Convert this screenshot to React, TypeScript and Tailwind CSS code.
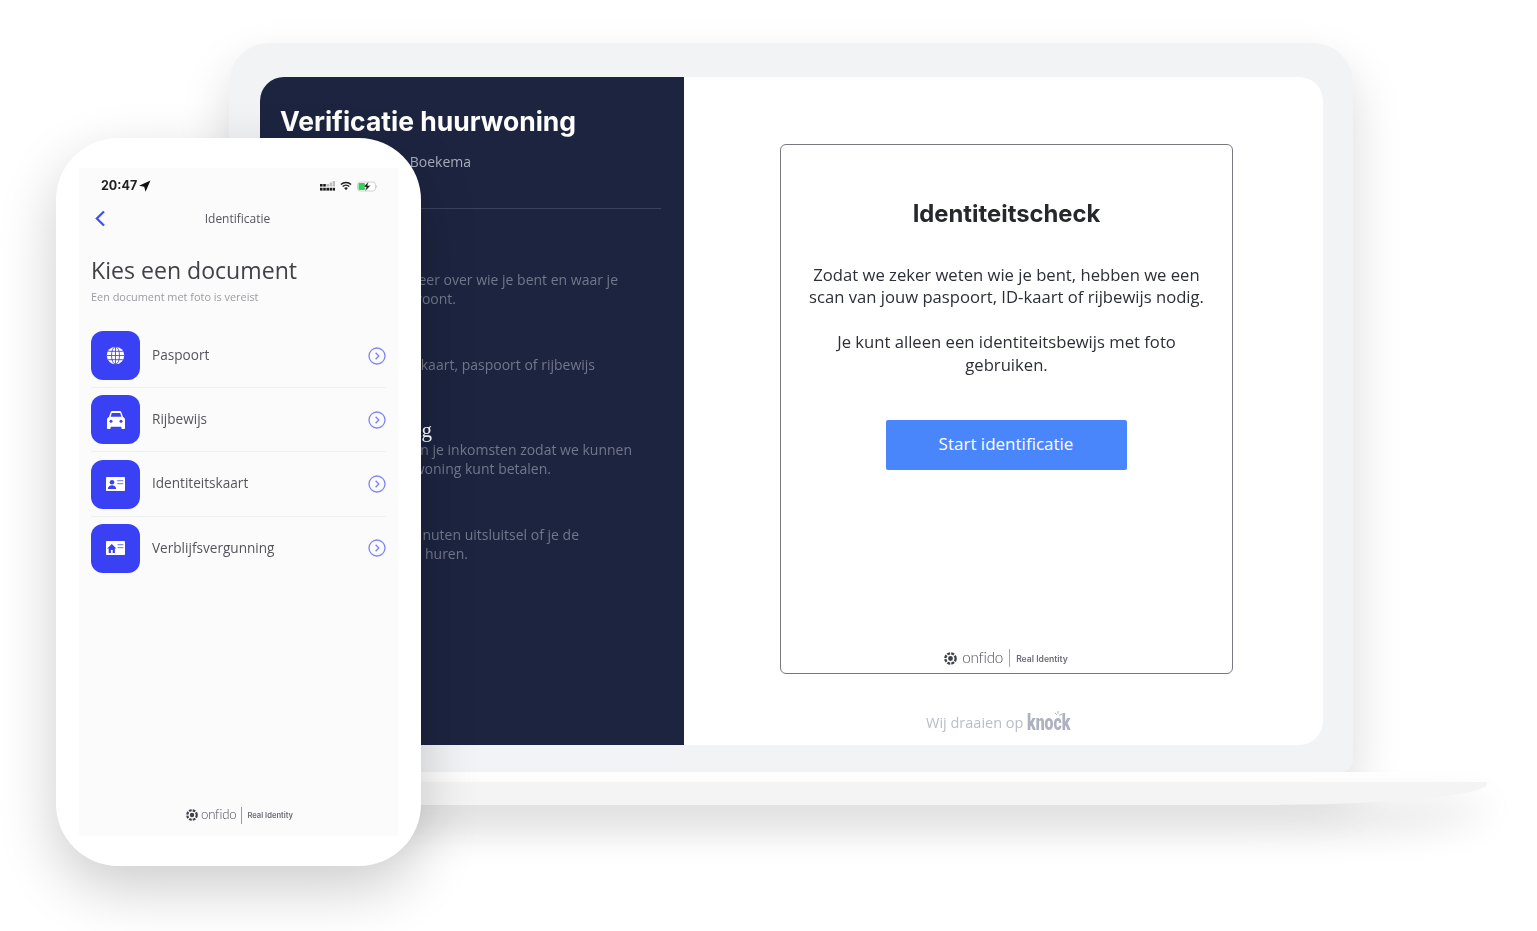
import React from "react";

const open = "font-['Open_Sans',sans-serif]";
const display = "font-['Inter',sans-serif]";

type Line = { text: string; w: string };
type Section = { head: string; headClass: string; lines: Line[] };
const headBase = "font-['Liberation_Serif',serif] leading-[19px] font-normal text-white whitespace-nowrap flex justify-end";
const sections: Section[] = [
  {
    head: "Gegevens",
    headClass: "w-[100px] text-[18px]",
    lines: [
      { text: "Vertel ons meer over wie je bent en waar je", w: "w-[337px]" },
      { text: "op dit moment woont.", w: "w-[175px]" },
    ],
  },
  {
    head: "Identiteit",
    headClass: "w-[100px] text-[18px]",
    lines: [{ text: "Upload je ID-kaart, paspoort of rijbewijs", w: "w-[314px]" }],
  },
  {
    head: "Inkomenstoetsing",
    headClass: "w-[151px] text-[21px]",
    lines: [
      { text: "Wij verifiëren je inkomsten zodat we kunnen", w: "w-[351px]" },
      { text: "zien of je de woning kunt betalen.", w: "w-[270px]" },
    ],
  },
  {
    head: "Resultaat",
    headClass: "w-[100px] text-[18px]",
    lines: [
      { text: "Binnen enkele minuten uitsluitsel of je de", w: "w-[298px]" },
      { text: "woning mag huren.", w: "w-[187px]" },
    ],
  },
];

function OnfidoMark({ size }: { size: number }) {
  return (
    <svg width={size} height={size} viewBox="0 0 24 24" className="shrink-0">
      <circle cx="12" cy="12" r="4.4" fill="#3f4249" />
      <circle cx="12" cy="12" r="9.5" fill="none" stroke="#3f4249" strokeWidth="4.400" strokeDasharray="5.500 2" />
    </svg>
  );
}

function Onfido({ small }: { small?: boolean }) {
  if (small) {
    return (
      <div className="flex items-center h-[18px]">
        <OnfidoMark size={12} />
        <span className="ml-[3px] font-['Lato',sans-serif] font-light text-[13.200px] leading-none tracking-[-0.2px] text-[#4c4f56]">onfido</span>
        <span className="ml-[5px] w-px h-[17px] bg-[#9a9ca3]" />
        <span className="ml-[5px] mt-[2px] font-['Inter',sans-serif] font-semibold text-[7.600px] leading-none text-[#6a6d75] whitespace-nowrap">Real Identity</span>
      </div>
    );
  }
  return (
    <div className="flex items-center h-[18px]">
      <OnfidoMark size={13} />
      <span className="ml-[5px] font-['Lato',sans-serif] font-light text-[15.200px] leading-none tracking-[-0.2px] text-[#4c4f56]">onfido</span>
      <span className="ml-[6px] w-px h-[18px] bg-[#a5a7ad]" />
      <span className="ml-[6px] mt-[2px] font-['Inter',sans-serif] font-semibold text-[8.600px] leading-none text-[#6a6d75] whitespace-nowrap">Real Identity</span>
    </div>
  );
}

function GlobeIcon() {
  return (
    <svg width="19" height="19" viewBox="0 0 20 20">
      <circle cx="10" cy="10" r="9.200" fill="#fff" />
      <g fill="none" stroke="#3a41f5" strokeWidth="0.900">
        <ellipse cx="10" cy="10" rx="4.200" ry="9.200" />
        <path d="M10 .8v18.400M.8 10h18.400M2.200 5.600h15.600M2.200 14.400h15.600" />
      </g>
    </svg>
  );
}
function CarIcon() {
  return (
    <svg width="20" height="18" viewBox="0 0 20 18">
      <path fill="#fff" d="M4.600 1.200C5 .5 5.600 0 6.400 0h7.200c.8 0 1.400.5 1.800 1.200L17 6c1.200.4 2 1.500 2 2.800V17c0 .6-.4 1-1 1h-1.600c-.6 0-1-.4-1-1v-1.200H4.600V17c0 .6-.4 1-1 1H2c-.6 0-1-.4-1-1V8.800C1 7.500 1.800 6.400 3 6z" />
      <path fill="#3a41f5" d="M5.800 2h8.400l1.100 3.800H4.700z" />
      <circle cx="5" cy="10.300" r="1.500" fill="#3a41f5" />
      <circle cx="15" cy="10.300" r="1.500" fill="#3a41f5" />
    </svg>
  );
}
function IdIcon() {
  return (
    <svg width="19" height="14" viewBox="0 0 19 14">
      <rect width="19" height="14" rx="0.800" fill="#fff" />
      <circle cx="6" cy="5.200" r="2.300" fill="#3a41f5" />
      <path fill="#3a41f5" d="M1.800 12c.2-2.400 2-3.700 4.200-3.700s4 1.300 4.200 3.700z" />
      <path fill="#3a41f5" opacity="0.6" d="M11.200 3h6v1.300h-6zM11.200 6h6v1.300h-6z" />
    </svg>
  );
}
function HomeCardIcon() {
  return (
    <svg width="19" height="14" viewBox="0 0 19 14">
      <rect width="19" height="14" rx="0.800" fill="#fff" />
      <path fill="#3a41f5" d="M5.800 3 1.200 7.600h1.500V12h2.200V9h1.800v3h2.200V7.600h1.500z" />
      <path fill="#3a41f5" opacity="0.6" d="M11.600 3h5.800v1.300h-5.800zM11.600 6h5.800v1.300h-5.800z" />
    </svg>
  );
}

function Chevron() {
  return (
    <svg width="18" height="18" viewBox="0 0 18 18" className="shrink-0">
      <circle cx="9" cy="9" r="8" fill="none" stroke="#7e84fa" strokeWidth="1.300" />
      <path d="M7.600 5.800 10.800 9l-3.200 3.200" fill="none" stroke="#7e84fa" strokeWidth="1.400" />
    </svg>
  );
}

const rows: { label: string; icon: React.ReactNode }[] = [
  { label: "Paspoort", icon: <GlobeIcon /> },
  { label: "Rijbewijs", icon: <CarIcon /> },
  { label: "Identiteitskaart", icon: <IdIcon /> },
  { label: "Verblijfsvergunning", icon: <HomeCardIcon /> },
];

function StatusIcons() {
  return (
    <div className="flex items-center gap-[5px]">
      <svg width="15" height="10" viewBox="0 0 15 10">
        <g fill="#1c1c1c">
          <rect x="0" y="3" width="2.600" height="2.600" />
          <rect x="3.200" y="3" width="2.600" height="2.600" />
          <rect x="0" y="6.800" width="2.600" height="2.800" />
          <rect x="3.200" y="6.800" width="2.600" height="2.800" />
          <rect x="6.400" y="6.800" width="2.600" height="2.800" />
          <rect x="9.600" y="6.800" width="2.400" height="2.800" />
          <rect x="12.600" y="6.800" width="2.400" height="2.800" />
        </g>
        <g fill="#bdbdbd">
          <rect x="6.400" y="3" width="2.600" height="2.600" />
          <rect x="9.600" y="1.500" width="2.400" height="4" />
          <rect x="12.600" y="0" width="2.400" height="5.500" />
        </g>
      </svg>
      <svg width="12" height="10" viewBox="0 0 13 10">
        <path d="M1 3.400a8 8 0 0 1 11 0M2.900 5.500a5.200 5.200 0 0 1 7.200 0" fill="none" stroke="#1d1d1d" strokeWidth="1.600" />
        <path d="M4.500 7.200a3 3 0 0 1 4 0L6.500 9.500z" fill="#1d1d1d" />
      </svg>
      <svg width="21" height="11" viewBox="0 0 21 11">
        <rect x="0.500" y="1" width="18" height="9" rx="2.600" fill="#fff" stroke="#d2d2d2" />
        <rect x="1.500" y="2" width="6.500" height="7" rx="1" fill="#35d05c" />
        <path d="M19.500 4c.9.300.9 2.700 0 3z" fill="#bdbdbd" />
        <path d="M11.500 .4 6.500 6h2.800L8 10.600 13.600 4.600h-3z" fill="#1a1a1a" stroke="#fff" strokeWidth="0.400" />
      </svg>
    </div>
  );
}

function Phone() {
  return (
    <div className="absolute left-[56px] top-[138px] w-[365px] h-[728px] rounded-[62px] bg-white shadow-[0_22px_58px_rgba(0,0,0,0.2)] px-[23px] pt-[30px] pb-[30px] z-10">
      <div className={`${open} h-[668px] bg-[#fbfbfc] flex flex-col blur-[0.3px]`}>
        <div className="flex items-center justify-between h-[20px] mt-[8px] pl-[22px] pr-[20px]">
          <div className="flex items-center gap-[2px]">
            <span className="font-['Inter',sans-serif] font-bold text-[12.500px] leading-none text-[#222]">20:47</span>
            <svg width="12" height="12" viewBox="0 0 11 11"><path d="M10.500.5 0 5.200l4.800.9L6 10.800z" fill="#111" /></svg>
          </div>
          <StatusIcons />
        </div>
        <div className="relative flex items-center justify-center h-[20px] mt-[13px] pr-[2px]">
          <svg width="12" height="17" viewBox="0 0 12 17" className="absolute left-[15px] top-[1px]">
            <path d="M10 1.500 2.800 8.500 10 15.500" fill="none" stroke="#3f4df5" strokeWidth="2.200" />
          </svg>
          <span className="text-[12px] leading-none text-[#55565b]">Identificatie</span>
        </div>
        <h2 className="ml-[12px] mt-[25px] text-[23.100px] leading-[32px] font-normal text-[#414246] whitespace-nowrap">Kies een document</h2>
        <p className="ml-[12px] mt-[4px] text-[10.900px] leading-[14px] text-[#9b9ca1] whitespace-nowrap">Een document met foto is vereist</p>
        <div className="mt-[27px] ml-[12px] mr-[12px] flex flex-col">
          {rows.map((r, i) => (
            <div key={r.label} className={`pb-[7px] mb-[7.300px] ${i < 3 ? "border-b border-[#f0f0f2]" : ""}`}>
              <div className="flex items-center h-[49px]">
                <div className="w-[49px] h-[49px] rounded-[12px] bg-[#3a41f5] flex items-center justify-center shrink-0">{r.icon}</div>
                <span className="ml-[12px] mb-px text-[13.600px] text-[#55565b] flex-1">{r.label}</span>
                <Chevron />
              </div>
            </div>
          ))}
        </div>
        <div className="mt-auto mb-[12px] flex justify-center pl-[2px]">
          <Onfido small />
        </div>
      </div>
    </div>
  );
}

function Sidebar() {
  return (
    <aside className="w-[424px] shrink-0 bg-[#1c2440] pl-[21px] pr-[23px] pt-[30px]">
      <h1 className={`${display} font-bold text-[26.500px] leading-[28px] -ml-px text-white whitespace-nowrap blur-[0.3px]`}>Verificatie huurwoning</h1>
      <p className={`${open} mt-[17px] text-[14px] leading-[19px] text-[#a9adba] whitespace-nowrap w-[190px] flex justify-end blur-[0.3px]`}>Welkom, Jan Willem Boekema</p>
      <div className="mt-[37px] h-px bg-[#3a4260]" />
      <div className="mt-[42px] flex flex-col blur-[0.3px]">
        {sections.map((s) => (
          <div key={s.head} className="h-[85px]">
            <h3 className={`${headBase} ${s.headClass}`}>{s.head}</h3>
            {s.lines.map((l) => (
              <p key={l.text} className={`${open} ${l.w} flex justify-end text-[14px] leading-[19px] text-[#72778b] whitespace-nowrap`}>{l.text}</p>
            ))}
          </div>
        ))}
      </div>
    </aside>
  );
}

function Card() {
  return (
    <div className="w-[453px] h-[530px] rounded-[6px] border border-[#77797f] flex flex-col items-center">
      <h2 className={`${display} mt-[54px] font-bold text-[23.800px] leading-[30px] text-[#26282d] blur-[0.3px]`}>Identiteitscheck</h2>
      <div className={`${open} mt-[34.500px] w-[420px] text-center text-[16.650px] leading-[22.500px] text-[#2c2f35] blur-[0.3px]`}>
        <p>Zodat we zeker weten wie je bent, hebben we een scan van jouw paspoort, ID-kaart of rijbewijs nodig.</p>
        <p className="mt-[22.500px] px-[20px]">Je kunt alleen een identiteitsbewijs met foto gebruiken.</p>
      </div>
      <button className={`${open} mt-[43.500px] w-[241px] h-[50px] pb-[2px] mr-px rounded-[2px] bg-[#4a86fb] text-white text-[17px]`}>Start identificatie</button>
      <div className="mt-auto mb-[6px] pr-[1px] blur-[0.3px]">
        <Onfido />
      </div>
    </div>
  );
}

function Laptop() {
  return (
    <div className="ml-[229px] pt-[43px] w-[1258px]">
      <div className="w-[1124px] h-[729px] rounded-t-[40px] rounded-b-[12px] bg-[#f2f3f5] pl-[31px] pt-[34px] shadow-[0_24px_50px_rgba(0,0,0,0.15)]">
        <div className="w-[1063px] h-[668px] rounded-[24px] overflow-hidden flex bg-white">
          <Sidebar />
          <main className="flex-1 flex flex-col pt-[67px] pl-[96px]">
            <Card />
            <div className="mt-[36px] ml-[146px] flex items-center blur-[0.3px]">
              <span className={`${open} text-[14.500px] leading-[26px] text-[#b9bdc9]`}>Wij draaien op</span>
              <span className="relative ml-[4px] w-[44px] h-[20px]">
                <span className="absolute left-0 top-[-2px] origin-left scale-x-[0.72] font-['Roboto',sans-serif] font-black text-[22px] leading-[24px] text-[#adb1c0]">knock</span>
                <svg width="8" height="8" viewBox="0 0 8 8" className="absolute left-[27px] top-[-2px]"><path d="M4 0v3M8 3 5 4.500M1 2l2 2" stroke="#adb1c0" strokeWidth="1" fill="none" /></svg>
              </span>
            </div>
          </main>
        </div>
      </div>
      <div className="h-[10px] bg-white" />
      <div className="h-[23px] bg-[#f4f4f5] rounded-br-[230px_21px] shadow-[0_24px_38px_rgba(0,0,0,0.16)]" />
    </div>
  );
}

export default function App() {
  return (
    <div className="relative w-[1537px] h-[931px] overflow-hidden bg-white">
      <Laptop />
      <Phone />
    </div>
  );
}
